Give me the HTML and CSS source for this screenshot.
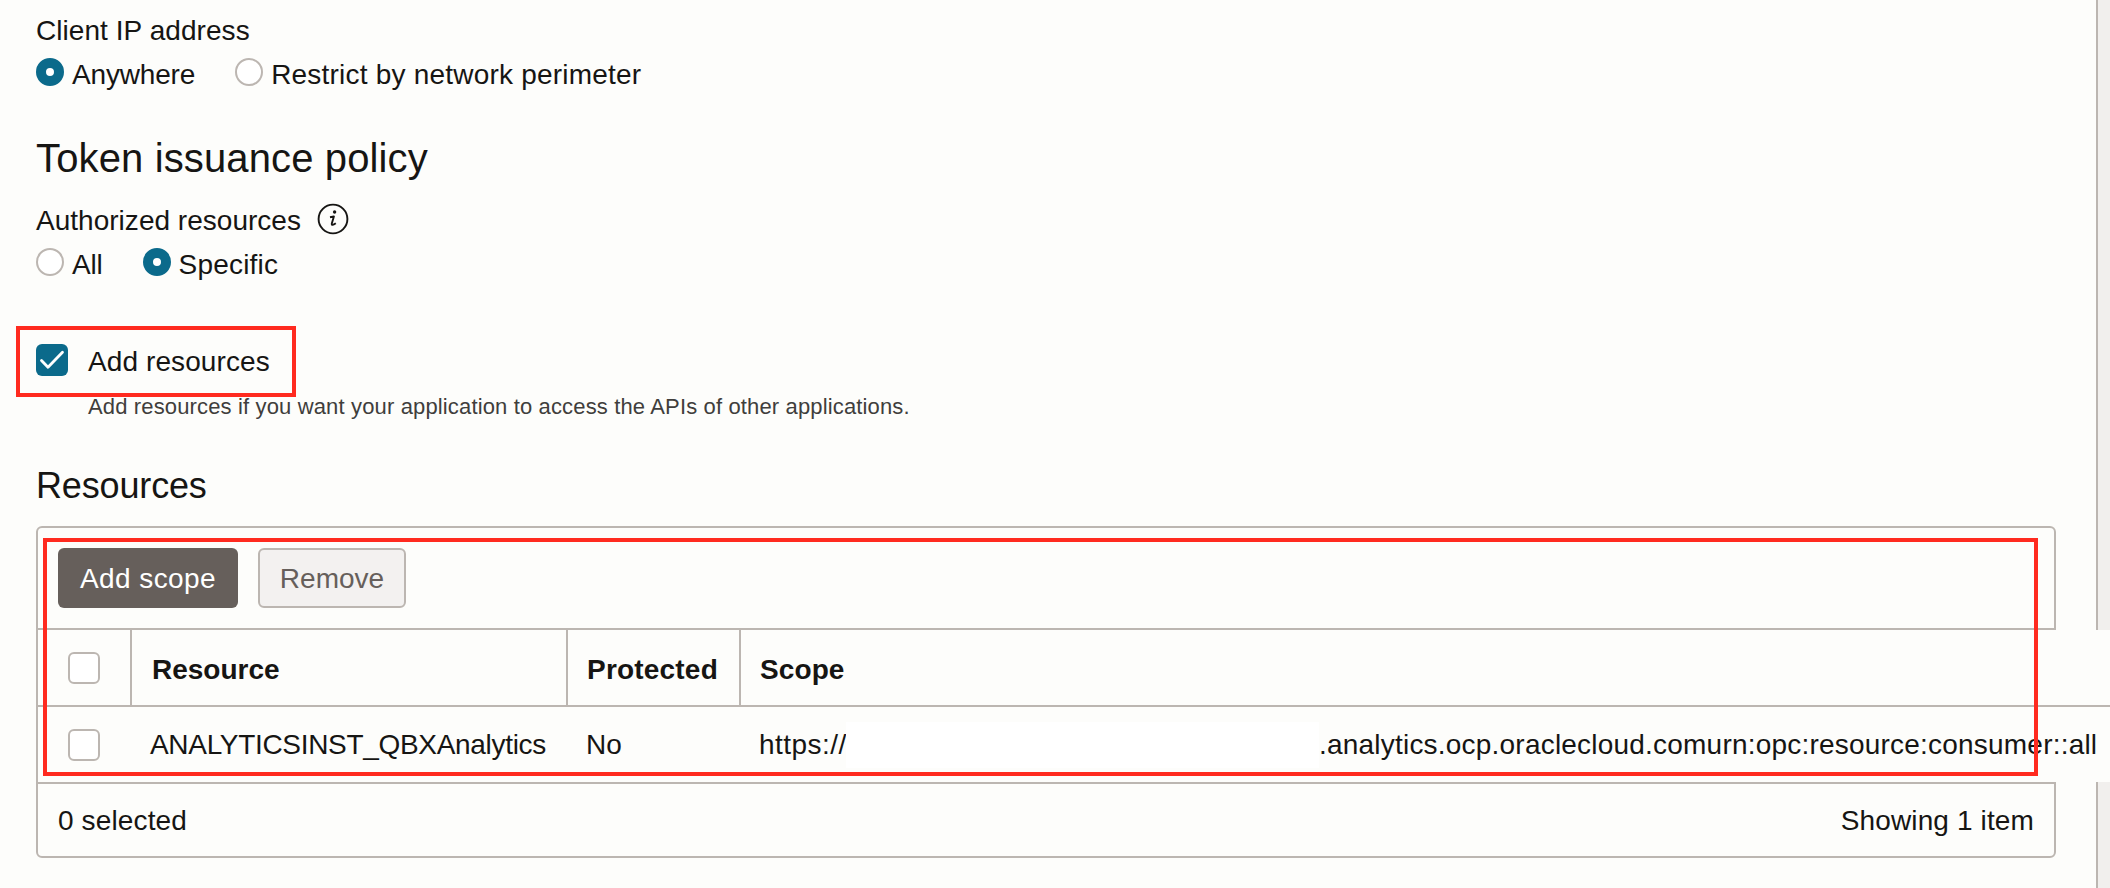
FILE: index.html
```html
<!DOCTYPE html>
<html lang="en">
<head>
<meta charset="utf-8">
<title>Token issuance policy</title>
<link rel="stylesheet" href="styles.css">
</head>
<body>
<div class="page">
  <main class="content">
    <div class="label">Client IP address</div>
    <div class="radios">
      <label class="option"><span class="radio on"></span><span class="t-anywhere">Anywhere</span></label>
      <label class="option"><span class="radio"></span><span class="t-restrict">Restrict by network perimeter</span></label>
    </div>
    <h1 class="heading">Token issuance policy</h1>
    <div class="label with-icon"><span>Authorized resources</span>
      <svg class="info" viewBox="0 0 32 32"><circle cx="16" cy="16" r="14.4" fill="none" stroke="#161513" stroke-width="1.9"/><circle cx="17.6" cy="9" r="1.7" fill="#161513"/><path d="M13 14.2 L16.9 13.4 L14.8 20.6 Q14.5 23.4 18.8 20.2" fill="none" stroke="#161513" stroke-width="1.9" stroke-linejoin="round"/></svg>
    </div>
    <div class="radios">
      <label class="option"><span class="radio"></span><span class="t-all">All</span></label>
      <label class="option"><span class="radio on"></span><span class="t-specific">Specific</span></label>
    </div>
    <div class="add-row">
      <span class="check on"><svg viewBox="0 0 32 32"><path d="M5.5 16.5 L12 23.3 L26.5 8.2" fill="none" stroke="#fff" stroke-width="2.8" stroke-linecap="round" stroke-linejoin="round"/></svg></span>
      <span class="t-add">Add resources</span>
      <div class="mark mark-add"></div>
    </div>
    <div class="help">Add resources if you want your application to access the APIs of other applications.</div>
    <h2 class="subheading">Resources</h2>
    <section class="panel">
      <div class="toolbar">
        <button class="btn primary">Add scope</button>
        <button class="btn disabled">Remove</button>
      </div>
      <div class="table">
        <div class="row head">
          <div class="cell tick"><span class="check"></span></div>
          <div class="cell">Resource</div>
          <div class="cell"><span class="t-protected">Protected</span></div>
          <div class="cell"><span class="t-scope">Scope</span></div>
        </div>
        <div class="row">
          <div class="cell tick"><span class="check"></span></div>
          <div class="cell"><span class="t-name">ANALYTICSINST_QBXAnalytics</span></div>
          <div class="cell">No</div>
          <div class="cell"><span class="scheme">https://</span><span class="redacted"></span><span class="t-host">.analytics.ocp.oraclecloud.comurn:opc:resource:consumer::all</span></div>
        </div>
      </div>
      <div class="footer"><span>0 selected</span><span>Showing 1 item</span></div>
      <div class="mark mark-table"></div>
    </section>
  </main>
  <aside class="rail"></aside>
</div>
</body>
</html>
```

FILE: styles.css
```css
* { box-sizing: border-box; }
body {
  margin: 0;
  background: #fdfdfb;
  color: #161513;
  font-family: "Liberation Sans", Arial, sans-serif;
  font-size: 28px;
  line-height: 40px;
}
.page { display: flex; width: 2110px; height: 888px; overflow: hidden; }
.content { width: 2096px; flex: none; padding: 11px 40px 0 36px; white-space: nowrap; }
.rail { flex: 1; background: #f1efed; border-left: 2px solid #bcb6b1; }
.label { height: 40px; letter-spacing: 0.06px; }
.radios { display: flex; gap: 40px; height: 40px; margin-top: 4px; }
.option { display: flex; gap: 8px; }
.radio { width: 28px; height: 28px; margin-top: 3px; border: 2px solid #bcb6b1; border-radius: 50%; background: #fff; }
.radio.on { border: 10px solid #0b6a8b; }
.t-anywhere { letter-spacing: -0.17px; }
.t-restrict { letter-spacing: 0.21px; }
.t-all { letter-spacing: -0.2px; }
.t-specific { letter-spacing: 0.2px; }
.t-add { letter-spacing: 0.1px; }
.heading { margin: 37px 0 0; font-size: 40px; line-height: 52px; font-weight: 400; letter-spacing: 0.13px; }
.with-icon { display: flex; gap: 16px; margin-top: 17px; letter-spacing: 0.02px; }
.info { width: 32px; height: 32px; margin-top: 2px; }
.add-row { position: relative; display: flex; gap: 20px; height: 40px; margin-top: 57px; }
.check { display: block; flex: none; width: 32px; height: 32px; border: 2px solid #bcb6b1; border-radius: 6px; background: #fff; }
.check.on { margin-top: 2px; border: 0; background: #0b6a8b; }
.check svg { display: block; width: 32px; height: 32px; }
.mark { position: absolute; border: 4px solid #ff2a1f; pointer-events: none; }
.mark-add { left: -20px; top: -16px; width: 280px; height: 71px; }
.help { margin: 10px 0 0 52px; font-size: 22px; line-height: 30px; letter-spacing: 0.145px; color: #403e3c; }
.subheading { margin: 40px 0 0; font-size: 36px; line-height: 48px; font-weight: 400; letter-spacing: -0.15px; }
.panel { position: relative; width: 2020px; height: 332px; margin-top: 16px; border: 2px solid #bcb6b1; border-radius: 6px; }
.toolbar { display: flex; gap: 20px; height: 100px; padding: 20px; box-shadow: 0 2px 0 #bcb6b1; }
.btn { height: 60px; padding: 2px 0 0; border: 0; border-radius: 6px; font: inherit; }
.btn.primary { width: 180px; background: #665f5b; color: #fff; letter-spacing: 0.4px; }
.btn.disabled { width: 148px; border: 2px solid #bcb6b1; background: #f3f1f0; color: #665f5b; }
.table { position: relative; width: 2072px; margin-top: 2px; background: #fdfdfb; }
.row { display: grid; grid-template-columns: 94px 436px 173px 1fr; height: 75px; }
.head { height: 77px; border-bottom: 2px solid #bcb6b1; font-weight: 700; }
.cell { display: flex; align-items: center; padding-left: 18px; }
.head .cell { padding-top: 4px; border-right: 2px solid #bcb6b1; padding-left: 20px; }
.head .cell:last-child { border-right: 0; padding-left: 19px; }
.head .cell:nth-child(3) { padding-left: 19px; }
.cell.tick, .head .cell.tick { align-items: flex-start; padding: 22px 0 0 30px; }
.t-protected { letter-spacing: 0.2px; }
.t-scope { letter-spacing: 0.1px; }
.t-name { letter-spacing: -0.31px; }
.scheme { width: 87px; overflow: hidden; letter-spacing: 0.45px; }
.redacted { width: 473px; height: 46px; background: #fff; }
.t-host { letter-spacing: 0.21px; }
.footer { display: flex; justify-content: space-between; align-items: center; height: 74px; padding: 1px 20px 0; border-top: 2px solid #bcb6b1; letter-spacing: 0.13px; }
.mark-table { left: 5px; top: 10px; width: 1995px; height: 238px; }
```
